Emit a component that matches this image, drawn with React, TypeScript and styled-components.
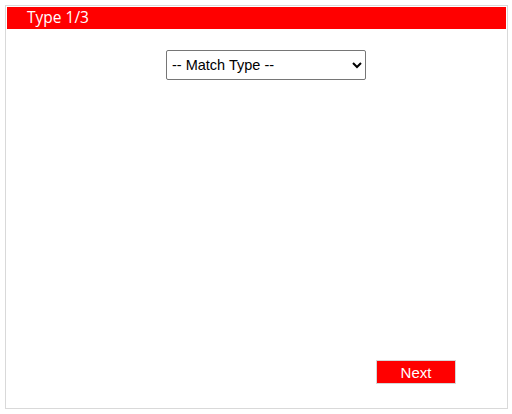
import React from "react";
import styled, { createGlobalStyle } from "styled-components";

const Global = createGlobalStyle`
  html, body { margin: 0; padding: 0; background: #fff; }
  body { font-family: "Liberation Sans", Arial, sans-serif; }
`;

const Panel = styled.div`
  margin: 5px;
  width: 503px;
  height: 404px;
  box-sizing: border-box;
  border: 1px solid #d9d9d9;
  padding: 1px;
  display: flex;
  flex-direction: column;
`;

const Header = styled.div`
  height: 22px;
  background: #ff0000;
  color: #fff;
  font-family: "Open Sans", "Noto Sans", sans-serif;
  font-size: 15.5px;
  line-height: 21px;
  padding-left: 20px;
`;

const Body = styled.div`
  flex: 1;
  display: flex;
  flex-direction: column;
  padding: 21px 0 23px 159px;
`;

const Select = styled.select`
  width: 200px;
  height: 30px;
  box-sizing: border-box;
  border: 1px solid #767676;
  border-radius: 2px;
  background: #fff;
  color: #000;
  font-family: "Liberation Sans", Arial, sans-serif;
  font-size: 14.5px;
  padding: 0 1px;
`;

const Footer = styled.div`
  margin-top: auto;
  display: flex;
  padding-left: 210px;
`;

const NextButton = styled.button`
  width: 80px;
  height: 24px;
  box-sizing: border-box;
  background: #ff0000;
  color: #fff;
  border: 1px solid #d6d6d6;
  font-family: "Liberation Sans", Arial, sans-serif;
  font-size: 15px;
  padding: 0;
  cursor: pointer;
`;

export default function App() {
  return (
    <>
      <Global />
      <Panel>
        <Header>Type 1/3</Header>
        <Body>
          <Select defaultValue="">
            <option value="">-- Match Type --</option>
          </Select>
          <Footer>
            <NextButton>Next</NextButton>
          </Footer>
        </Body>
      </Panel>
    </>
  );
}
